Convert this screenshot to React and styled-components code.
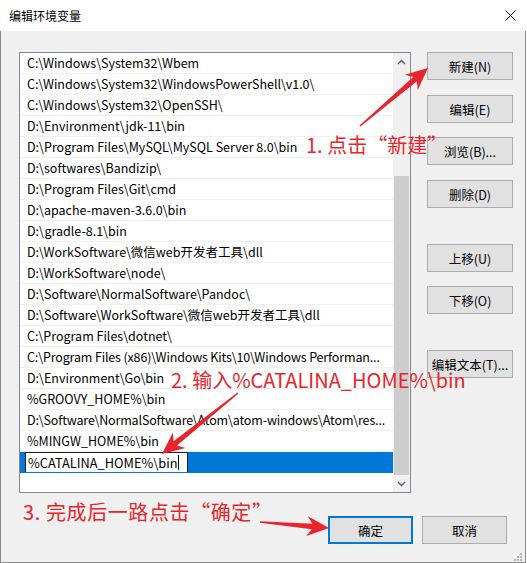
import React from "react";
import styled, { createGlobalStyle } from "styled-components";

const GlobalStyle = createGlobalStyle`
    body {
        margin: 0;
        background: #ffffff;
        font-family: "Noto Sans CJK SC", "Noto Sans", sans-serif;
    }
    * { box-sizing: border-box; }
`;

const Window = styled.div`
    position: relative;
    width: 526px;
    height: 563px;
    display: flex;
    flex-direction: column;
    font-family: "Noto Sans CJK SC", "Noto Sans", sans-serif;
    color: #000;
`;

const TitleBar = styled.div`
    height: 31px;
    flex-shrink: 0;
    background: #fff;
    display: flex;
    align-items: center;
    justify-content: space-between;
    padding: 0 10px 0 9px;
`;

const Title = styled.span`
    font-size: 12px;
    line-height: 14px;
`;

const Body = styled.div`
    flex: 1;
    background: #f0f0f0;
    border: 1px solid #8c8c8c;
    border-top: none;
    padding: 21px 13px 0 18px;
    display: flex;
    flex-direction: column;
`;

const Main = styled.div`
    display: flex;
    gap: 16px;
`;

const ListBox = styled.div`
    width: 392px;
    height: 441px;
    flex-shrink: 0;
    border: 1px solid #828790;
    background: #fff;
    display: flex;
`;

const Rows = styled.div`
    flex: 1;
    overflow: hidden;
`;

const Row = styled.div`
    height: 21px;
    border-bottom: 1px solid ${p => (p.$selected ? "transparent" : "#f0f0f0")};
    background: ${p => (p.$selected ? "#0078d7" : "transparent")};
    padding-left: ${p => (p.$selected ? "5px" : "7px")};
    font-size: 12.5px;
    line-height: 20px;
    letter-spacing: ${p => p.$tight ? -0.15 : 0}px;
    white-space: nowrap;
    overflow: hidden;
`;

const EditBox = styled.div`
    width: 163px;
    height: 21px;
    background: #fff;
    border: 1px solid #1e1e1e;
    padding-left: 2px;
    font-size: 12.8px;
    line-height: 18px;
    display: flex;
    align-items: center;
`;

const Caret = styled.span`
    display: inline-block;
    width: 1px;
    height: 15px;
    background: #000;
    margin-left: 1px;
`;

const Scrollbar = styled.div`
    width: 17px;
    background: #f0f0f0;
    display: flex;
    flex-direction: column;
`;

const ScrollArrow = styled.div`
    height: 17px;
    display: flex;
    align-items: center;
    justify-content: center;
`;

const Track = styled.div`
    flex: 1;
    display: flex;
    flex-direction: column;
    justify-content: flex-end;
`;

const Thumb = styled.div`
    height: 299px;
    margin: 0 1px;
    background: #cdcdcd;
`;

const ButtonColumn = styled.div`
    width: 86px;
    flex-shrink: 0;
    display: flex;
    flex-direction: column;
`;

const Button = styled.div`
    width: ${p => p.$width || 86}px;
    height: 28px;
    margin-top: ${p => p.$gap || 0}px;
    background: #e1e1e1;
    border: ${p => (p.$primary ? "2px solid #0078d7" : "1px solid #adadad")};
    font-size: 12.5px;
    display: flex;
    align-items: center;
    justify-content: center;
`;

const Footer = styled.div`
    margin-top: 23px;
    padding-right: 5px;
    display: flex;
    justify-content: flex-end;
    gap: 9px;
`;

const Overlay = styled.svg`
    position: absolute;
    left: 0;
    top: 0;
    pointer-events: none;
`;

const Grip = styled.svg`
    position: absolute;
    right: 4px;
    bottom: 2px;
`;

const Note = styled.div`
    position: absolute;
    left: ${p => p.$x}px;
    top: ${p => p.$y}px;
    font-size: 20px;
    line-height: 20px;
    letter-spacing: ${p => p.$spacing || 0}px;
    color: #e8252c;
    white-space: nowrap;
`;

const paths = [
    "C:\\Windows\\System32\\Wbem",
    "C:\\Windows\\System32\\WindowsPowerShell\\v1.0\\",
    "C:\\Windows\\System32\\OpenSSH\\",
    "D:\\Environment\\jdk-11\\bin",
    "D:\\Program Files\\MySQL\\MySQL Server 8.0\\bin",
    "D:\\softwares\\Bandizip\\",
    "D:\\Program Files\\Git\\cmd",
    "D:\\apache-maven-3.6.0\\bin",
    "D:\\gradle-8.1\\bin",
    "D:\\WorkSoftware\\微信web开发者工具\\dll",
    "D:\\WorkSoftware\\node\\",
    "D:\\Software\\NormalSoftware\\Pandoc\\",
    "D:\\Software\\WorkSoftware\\微信web开发者工具\\dll",
    "C:\\Program Files\\dotnet\\",
    "C:\\Program Files (x86)\\Windows Kits\\10\\Windows Performan...",
    "D:\\Environment\\Go\\bin",
    "%GROOVY_HOME%\\bin",
    "D:\\Software\\NormalSoftware\\Atom\\atom-windows\\Atom\\res...",
    "%MINGW_HOME%\\bin",
];

// tapered arrow: thin tail, barbed head
function arrowPoints(x1, y1, x2, y2) {
    const dx = x2 - x1, dy = y2 - y1;
    const len = Math.hypot(dx, dy);
    const ux = dx / len, uy = dy / len;
    const nx = -uy, ny = ux;
    const pt = (d, w) => `${x2 - ux * d + nx * w},${y2 - uy * d + ny * w}`;
    return [
        pt(len, 0.8), pt(17, 2.8), pt(22, 10), pt(0, 0),
        pt(22, -10), pt(17, -2.8), pt(len, -0.8),
    ].join(" ");
}

const arrows = [
    [360, 126, 428, 68],
    [238, 393, 162, 454],
    [260, 522, 329, 528],
];

export default function App() {
    return (
        <>
            <GlobalStyle />
            <Window>
                <TitleBar>
                    <Title>编辑环境变量</Title>
                    <svg width="11" height="11" viewBox="0 0 11 11">
                        <path d="M0.5 0.5 L10.5 10.5 M10.5 0.5 L0.5 10.5" stroke="#000" strokeWidth="1" />
                    </svg>
                </TitleBar>
                <Body>
                    <Main>
                        <ListBox>
                            <Rows>
                                {paths.map(p => (
                                    <Row key={p} $tight={p.endsWith("...")}>{p}</Row>
                                ))}
                                <Row $selected>
                                    <EditBox>%CATALINA_HOME%\bin<Caret /></EditBox>
                                </Row>
                            </Rows>
                            <Scrollbar>
                                <ScrollArrow>
                                    <svg width="9" height="6" viewBox="0 0 9 6">
                                        <polyline points="1,5 4.5,1.5 8,5" fill="none" stroke="#606060" strokeWidth="1.4" />
                                    </svg>
                                </ScrollArrow>
                                <Track><Thumb /></Track>
                                <ScrollArrow>
                                    <svg width="9" height="6" viewBox="0 0 9 6">
                                        <polyline points="1,1 4.5,4.5 8,1" fill="none" stroke="#606060" strokeWidth="1.4" />
                                    </svg>
                                </ScrollArrow>
                            </Scrollbar>
                        </ListBox>
                        <ButtonColumn>
                            <Button>新建(N)</Button>
                            <Button $gap={15}>编辑(E)</Button>
                            <Button $gap={14}>浏览(B)...</Button>
                            <Button $gap={15}>删除(D)</Button>
                            <Button $gap={36}>上移(U)</Button>
                            <Button $gap={14}>下移(O)</Button>
                            <Button $gap={36}>编辑文本(T)...</Button>
                        </ButtonColumn>
                    </Main>
                    <Footer>
                        <Button $width={85} $primary>确定</Button>
                        <Button $width={85}>取消</Button>
                    </Footer>
                </Body>
                <Grip width="9" height="9" viewBox="0 0 9 9">
                    {[[7, 1], [4, 4], [7, 4], [1, 7], [4, 7], [7, 7]].map(([x, y]) => (
                        <rect key={`${x}-${y}`} x={x} y={y} width="2" height="2" fill="#b4b4b4" />
                    ))}
                </Grip>
                <Overlay width="526" height="563">
                    {arrows.map(a => (
                        <polygon key={a.join()} points={arrowPoints(...a)} fill="#e8252c" />
                    ))}
                </Overlay>
                <Note $x={306} $y={135}>1. 点击“新建”</Note>
                <Note $x={171} $y={370}>2. 输入%CATALINA_HOME%\bin</Note>
                <Note $x={23} $y={502} $spacing={0.6}>3. 完成后一路点击“确定”</Note>
            </Window>
        </>
    );
}
